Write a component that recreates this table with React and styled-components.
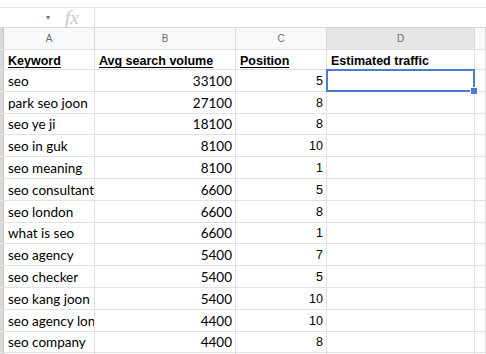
import React from 'react';
import styled, { createGlobalStyle } from 'styled-components';

const GlobalStyle = createGlobalStyle`
    html, body {
        margin: 0;
        padding: 0;
        background: #ffffff;
        overflow: hidden;
    }
`;

const COLS = '4px 91px 141px 91px 148px 1fr';

const Sheet = styled.div`
    width: 486px;
    height: 354px;
    overflow: hidden;
    font-family: "Liberation Sans", Arial, sans-serif;
    color: #000;
`;

const FormulaBar = styled.div`
    display: grid;
    grid-template-columns: 95px 1fr;
    height: 19px;
    margin-top: 7px;
    border-top: 1px solid #e3e3e3;
    border-bottom: 1px solid #d6d6d6;
    align-items: center;

    .name-box {
        display: flex;
        align-items: center;
        height: 100%;
        border-right: 1px solid #e0e0e0;
    }

    .arrow {
        margin-left: 46px;
        font-size: 8px;
        color: #777;
    }

    .fx {
        margin-left: 15px;
        font-family: "Liberation Serif", serif;
        font-style: italic;
        font-size: 19px;
        line-height: 19px;
        color: #c9c9c9;
    }
`;

const Row = styled.div`
    display: grid;
    grid-template-columns: ${COLS};
    height: ${p => p.$height || 21}px;
    border-bottom: 1px solid #e2e2e2;
    box-sizing: content-box;
`;

const Corner = styled.div`
    background: #d9d9d9;
    border-right: 1px solid #c4c4c4;
`;

const Letter = styled.div`
    display: flex;
    align-items: center;
    justify-content: center;
    font-size: 10px;
    color: #6b6b6b;
    background: ${p => (p.$active ? '#e6e6e6' : '#f8f9fa')};
    border-right: 1px solid #d8d8d8;
`;

const Cell = styled.div`
    position: relative;
    display: flex;
    align-items: center;
    justify-content: ${p => (p.$right ? 'flex-end' : 'flex-start')};
    padding: ${p => (p.$bold ? '3px' : '1px')} 3px 0 4px;
    border-right: 1px solid #e2e2e2;
    overflow: ${p => (p.$open ? 'visible' : 'hidden')};
    white-space: nowrap;
    font-family: ${p => (p.$calibri ? '"Lato", "Open Sans", sans-serif' : '"Liberation Sans", Arial, sans-serif')};
    font-size: ${p => (p.$calibri ? 13.5 : 12.5)}px;
    font-weight: ${p => (p.$bold ? 700 : 400)};
    text-decoration: ${p => (p.$underline ? 'underline' : 'none')};
    text-underline-offset: 2px;
    text-decoration-thickness: 1px;
    z-index: ${p => (p.$open ? 2 : 'auto')};
`;

const Selection = styled.div`
    position: absolute;
    inset: -1px -1px -1px -1px;
    border: 2px solid #4a7bd6;
    pointer-events: none;

    &::after {
        content: '';
        position: absolute;
        right: -5px;
        bottom: -5px;
        width: 6px;
        height: 6px;
        background: #4a7bd6;
        border: 1px solid #fff;
    }
`;

const data = [
    ['seo', 33100, 5],
    ['park seo joon', 27100, 8],
    ['seo ye ji', 18100, 8],
    ['seo in guk', 8100, 10],
    ['seo meaning', 8100, 1],
    ['seo consultant', 6600, 5],
    ['seo london', 6600, 8],
    ['what is seo', 6600, 1],
    ['seo agency', 5400, 7],
    ['seo checker', 5400, 5],
    ['seo kang joon', 5400, 10],
    ['seo agency london', 4400, 10],
    ['seo company', 4400, 8],
    ['', '', ''],
];

const App = () => {
    return (
        <Sheet>
            <GlobalStyle />
            <FormulaBar>
                <div className="name-box">
                    <span className="arrow">▾</span>
                    <span className="fx">fx</span>
                </div>
                <div />
            </FormulaBar>
            <Row $height={21}>
                <Corner />
                <Letter>A</Letter>
                <Letter>B</Letter>
                <Letter>C</Letter>
                <Letter $active>D</Letter>
                <Letter />
            </Row>
            <Row $height={19}>
                <Corner />
                <Cell $bold $underline>Keyword</Cell>
                <Cell $bold $underline>Avg search volume</Cell>
                <Cell $bold $underline>Position</Cell>
                <Cell $bold>Estimated traffic</Cell>
                <Cell />
            </Row>
            {data.map((row, i) => (
                <Row key={i} $height={20.8}>
                    <Corner />
                    <Cell $calibri>{row[0]}</Cell>
                    <Cell $calibri $right>{row[1]}</Cell>
                    <Cell $right>{row[2]}</Cell>
                    <Cell $open={i === 0}>{i === 0 && <Selection />}</Cell>
                    <Cell />
                </Row>
            ))}
        </Sheet>
    );
};

export default App;
